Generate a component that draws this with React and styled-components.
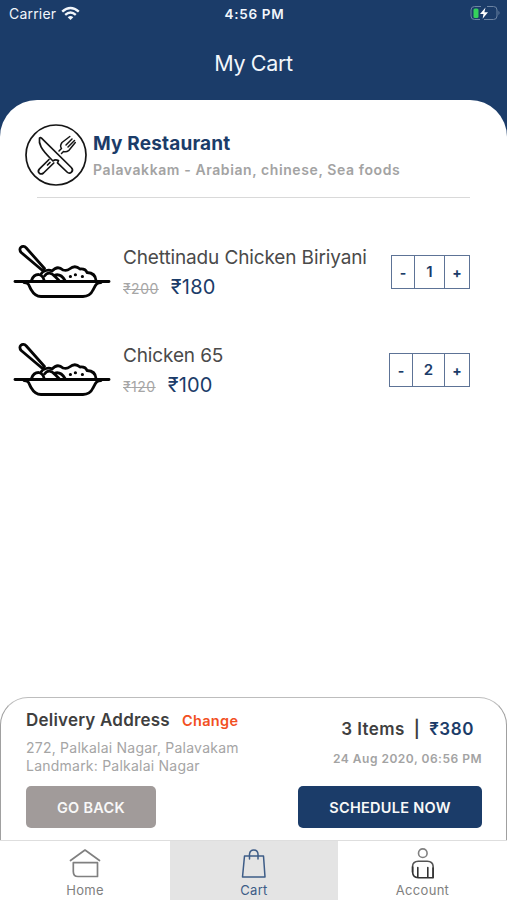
import React, { useState } from 'react';
import styled, { createGlobalStyle } from 'styled-components';

const NAVY = '#1b3c69';

const GlobalStyle = createGlobalStyle`
  body {
    margin: 0;
    background: #fff;
    font-family: Inter, 'Liberation Sans', sans-serif;
    overflow: hidden;
  }

  * {
    box-sizing: border-box;
  }
`;

const Screen = styled.div`
  display: flex;
  flex-direction: column;
  width: 507px;
  height: 900px;
  background: linear-gradient(${NAVY} 200px, #fff 200px);
`;

const StatusBar = styled.div`
  display: grid;
  grid-template-columns: 1fr auto 1fr;
  align-items: center;
  height: 28px;
  padding: 0 6px 0 9px;
  color: #f2f6fb;
`;

const Carrier = styled.div`
  display: flex;
  align-items: center;
  gap: 5px;
  margin-top: -2px;
  font-size: 14px;
  letter-spacing: 0.2px;
`;

const Clock = styled.div`
  margin-right: 1px;
  font-size: 13.5px;
  font-weight: 600;
  letter-spacing: 0.7px;
`;

const Battery = styled.svg`
  justify-self: end;
  margin-top: -2px;
`;

const Header = styled.h1`
  height: 72px;
  margin: 0;
  color: #f2f6fb;
  font-size: 21.5px;
  font-weight: 400;
  line-height: 71px;
  letter-spacing: -0.35px;
  text-align: center;
`;

const Sheet = styled.main`
  display: flex;
  flex: 1;
  flex-direction: column;
  background: #fff;
  border-radius: 37px 37px 0 0;
`;

const Restaurant = styled.section`
  display: flex;
  gap: 6px;
  height: 97px;
  padding: 24px 0 0 25px;
`;

const RestaurantName = styled.h2`
  margin: 8px 0 0;
  color: ${NAVY};
  font-size: 19px;
  font-weight: 700;
  line-height: 24px;
  letter-spacing: 0.16px;
`;

const Cuisine = styled.div`
  margin-top: 4px;
  color: #a3a3a3;
  font-size: 14px;
  font-weight: 600;
  line-height: 20px;
  letter-spacing: 0.59px;
`;

const Divider = styled.hr`
  width: 433px;
  height: 1px;
  margin: 0 0 0 37px;
  border: 0;
  background: #d9d9d9;
`;

const Items = styled.ul`
  flex: 1;
  margin: 0;
  padding: 37px 37px 0 13px;
  list-style: none;
`;

const Item = styled.li`
  display: flex;
  align-items: flex-start;
  height: 98px;
`;

const Dish = styled.svg`
  margin-top: 8px;
`;

const ItemInfo = styled.div`
  flex: 1;
  margin-left: 12px;
`;

const ItemName = styled.div`
  padding-top: 11px;
  color: #4a4a4a;
  font-size: 19px;
  line-height: 24px;
  letter-spacing: -0.13px;
  white-space: nowrap;
`;

const Prices = styled.div`
  display: flex;
  align-items: baseline;
  gap: 12px;
  margin-top: 3px;
  line-height: 28px;
`;

const OldPrice = styled.s`
  color: #a6a6a6;
  font-size: 14px;
  letter-spacing: 0.5px;
`;

const Price = styled.span`
  color: ${NAVY};
  font-size: 20px;
  letter-spacing: 0.2px;
`;

const Stepper = styled.div`
  display: flex;
  height: 34px;
  margin-top: 20px;
  border: 1px solid #5d7396;
`;

const StepButton = styled.button`
  width: ${({ $width }) => $width}px;
  padding: 1px 0 0;
  border: 0;
  background: none;
  color: ${NAVY};
  font: 700 14px Inter, sans-serif;
`;

const Quantity = styled.span`
  width: ${({ $width }) => $width}px;
  border: solid #5d7396;
  border-width: 0 1px;
  color: ${NAVY};
  font-size: 15px;
  font-weight: 600;
  line-height: 32px;
  text-align: center;
`;

const Checkout = styled.section`
  display: flex;
  flex-direction: column;
  justify-content: space-between;
  height: 143px;
  padding: 10px 24px 12px 25px;
  border: solid #a0a0a0;
  border-width: 1px 1px 0;
  border-top-color: #bdbdbd;
  border-radius: 28px 28px 0 0;
`;

const Row = styled.div`
  display: flex;
  justify-content: space-between;
`;

const AddressHead = styled.div`
  display: flex;
  align-items: baseline;
  gap: 12px;
  line-height: 24px;
`;

const AddressTitle = styled.strong`
  color: #3f3f3f;
  font-size: 17px;
  font-weight: 600;
  letter-spacing: 0.2px;
`;

const Change = styled.a`
  color: #f2501f;
  font-size: 14.5px;
  font-weight: 600;
  letter-spacing: 0.35px;
`;

const Address = styled.div`
  margin-top: 6px;
  color: #a5a5a5;
  font-size: 14px;
  line-height: 17.5px;
  letter-spacing: 0.23px;
`;

const Summary = styled.div`
  display: flex;
  flex-direction: column;
  align-items: flex-end;
  padding-top: 9px;
`;

const Total = styled.div`
  display: flex;
  gap: 9px;
  margin-right: 8px;
  color: #3f3f3f;
  font-size: 17px;
  font-weight: 600;
  line-height: 24px;
  letter-spacing: 0.4px;
`;

const TotalPrice = styled.span`
  color: ${NAVY};
  letter-spacing: 0.6px;
`;

const Date = styled.div`
  margin-top: 8px;
  color: #a3a3a3;
  font-size: 12px;
  font-weight: 600;
  line-height: 20px;
  letter-spacing: 0.5px;
`;

const Button = styled.button`
  width: ${({ $width }) => $width}px;
  height: 42px;
  padding: 0;
  border: 0;
  border-radius: 5px;
  background: ${({ $primary }) => ($primary ? NAVY : '#a19b9a')};
  color: #f8f8f8;
  font: 600 14.5px Inter, sans-serif;
  letter-spacing: 0.28px;
`;

const TabBar = styled.nav`
  display: grid;
  grid-template-columns: 170px 168px 169px;
  height: 60px;
  border-top: 1px solid #dedede;
`;

const Tab = styled.div`
  display: flex;
  flex-direction: column;
  align-items: center;
  padding-top: 6px;
  background: ${({ $active }) => ($active ? '#e4e4e4' : '#fff')};
  color: ${({ $active }) => ($active ? '#3d5c87' : '#808080')};
  font-size: 13px;
  line-height: 18px;
  letter-spacing: 0.3px;
`;

const WifiIcon = () => (
  <svg width="19" height="15" viewBox="0 0 19 15" fill="none" stroke="#f2f6fb" strokeWidth="2.4">
    <path d="M1.2 5.7Q9.5 -1.8 17.8 5.7" />
    <path d="M4.2 8.8Q9.5 4.2 14.8 8.8" />
    <path d="M6.7 11.2Q9.5 8.8 12.3 11.2L9.5 14.1Z" fill="#f2f6fb" stroke="none" />
  </svg>
);

const BatteryIcon = () => (
  <Battery width="31" height="16" viewBox="0 0 31 16">
    <path
      d="M11 1.5H4.5A3.5 3.5 0 0 0 1 5v6a3.5 3.5 0 0 0 3.5 3.5H10M17 1.5h6.5A3.5 3.5 0 0 1 27 5v6a3.5 3.5 0 0 1-3.5 3.5H14"
      fill="none"
      stroke="#6d84a3"
    />
    <path d="M28.5 5.8Q30.5 8 28.5 10.2Z" fill="#6d84a3" />
    <rect x="3.5" y="3.5" width="5" height="9.5" rx="1.5" fill="#35d15b" />
    <path d="M15.5 2.5 10 8.9h3.5L12.6 13.8 18 7.3h-3.6Z" fill="#fff" />
  </Battery>
);

const CutleryIcon = () => (
  <svg width="62" height="62" viewBox="0 0 62 62" fill="none" stroke="#151515" strokeWidth="1.7" strokeLinejoin="round" strokeLinecap="round">
    <circle cx="31" cy="31" r="30" />
    <path d="M14.5 14C13.5 20 16 25 25.5 34.5L28 37Q30 35 33.5 36.5L32.5 38.8 42 48C45 51 49.5 47 46.3 43.5L16.5 14.2Q15.5 13 14.5 14Z" />
    <path d="M24 35.5 14.5 44.8C11.5 48 15.5 51.5 18.5 49L28.8 39M25 38.5l-2.5 2.5" />
    <path d="M44.8 12.5 37 18.5Q34.5 22 36.5 24.5L34 27M50.3 18.5 44 26.3Q41 28.5 38.5 27.5L36.5 29.5M47 15 41 21M49.5 16.5 43 23" strokeWidth="1.5" />
  </svg>
);

const DishIcon = () => (
  <Dish width="98" height="56" viewBox="0 0 98 56" fill="none" stroke="#050505" strokeWidth="2.8" strokeLinecap="round" strokeLinejoin="round">
    <path d="M2 38.5H96" />
    <path d="M11 39.5C16 39.5 16 43 18 46.5Q22 53.5 28 53.5H70Q77 53.5 80 47C82.5 42.5 83 39.5 88 39.5" />
    <path d="M31.5 25.5 13.3 5C9.5 .8 4.5 5.5 8.2 9.5L29.5 27.5Z" />
    <path d="M18.5 37.5Q20.5 31.5 25.5 31.5Q30 32.5 31 37M27.5 32Q29 28.5 33 27.5Q36.500 26.500 39 28Q44.500 22 50 27Q54 28 56.500 26Q62 21.500 67 26Q72.500 25.500 74 29.500Q82.500 30 83 37.500" />
    <path d="M31.5 33Q36 27 42 33.5L46 37.500M42 32Q48 30.500 52 37.500" />
    <path d="M57.3 33.500h.2M62.300 31.800h.2M69.300 33.500h.2" strokeWidth="3" />
  </Dish>
);

const HomeIcon = () => (
  <svg width="32" height="34" viewBox="0 0 32 34" fill="none" stroke="currentColor" strokeWidth="1.7" strokeLinecap="round" strokeLinejoin="round">
    <path d="M1.5 13.5 16 3l14.500 10.500" />
    <path d="M4.3 15.7H28.5V29.5H9Q4.3 29.5 4.3 24.5Z" />
  </svg>
);

const BagIcon = () => (
  <svg width="32" height="34" viewBox="0 0 32 34" fill="none" stroke="currentColor" strokeWidth="1.5" strokeLinecap="round" strokeLinejoin="round">
    <path d="M6.5 9H25.5L27 30H4.5Z" />
    <path d="M11.5 12V7Q12 3 15.8 3Q19.7 3 20 7V12" />
  </svg>
);

const PersonIcon = () => (
  <svg width="32" height="34" viewBox="0 0 32 34" fill="none" stroke="currentColor" strokeWidth="1.6" strokeLinecap="round" strokeLinejoin="round">
    <circle cx="15.8" cy="6.2" r="4.3" />
    <path d="M5.6 25V19Q5.8 14.5 11.3 14.2H20.3Q25.8 14.5 26.1 19V30.5" stroke="#555" />
    <path d="M5.6 20V25Q5.8 30.5 11.3 30.8H26.1V21M10.8 20.5V30M20.8 20.5V30" stroke="#333" />
  </svg>
);

const tabs = [
  { label: 'Home', Icon: HomeIcon },
  { label: 'Cart', Icon: BagIcon },
  { label: 'Account', Icon: PersonIcon },
];

const initialItems = [
  { name: 'Chettinadu Chicken Biriyani', oldPrice: 200, price: 180, count: 1, widths: [22, 31, 24] },
  { name: 'Chicken 65', oldPrice: 120, price: 100, count: 2, widths: [22, 33, 24] },
];

const App = () => {
  const [items, setItems] = useState(initialItems);

  const changeCount = (name, step) => {
    setItems(items.map((item) => (
      item.name === name ? { ...item, count: Math.max(0, item.count + step) } : item
    )));
  };

  return (
    <Screen>
      <GlobalStyle />
      <StatusBar>
        <Carrier>Carrier <WifiIcon /></Carrier>
        <Clock>4:56 PM</Clock>
        <BatteryIcon />
      </StatusBar>
      <Header>My Cart</Header>

      <Sheet>
        <Restaurant>
          <CutleryIcon />
          <div>
            <RestaurantName>My Restaurant</RestaurantName>
            <Cuisine>Palavakkam - Arabian, chinese, Sea foods</Cuisine>
          </div>
        </Restaurant>
        <Divider />

        <Items>
          {items.map(({ name, oldPrice, price, count, widths }) => (
            <Item key={name}>
              <DishIcon />
              <ItemInfo>
                <ItemName>{name}</ItemName>
                <Prices>
                  <OldPrice>₹{oldPrice}</OldPrice>
                  <Price>₹{price}</Price>
                </Prices>
              </ItemInfo>
              <Stepper>
                <StepButton $width={widths[0]} onClick={() => changeCount(name, -1)}>-</StepButton>
                <Quantity $width={widths[1]}>{count}</Quantity>
                <StepButton $width={widths[2]} onClick={() => changeCount(name, 1)}>+</StepButton>
              </Stepper>
            </Item>
          ))}
        </Items>

        <Checkout>
          <Row>
            <div>
              <AddressHead>
                <AddressTitle>Delivery Address</AddressTitle>
                <Change>Change</Change>
              </AddressHead>
              <Address>
                272, Palkalai Nagar, Palavakam
                <br />
                Landmark: Palkalai Nagar
              </Address>
            </div>
            <Summary>
              <Total>
                <span>3 Items</span>
                <span>|</span>
                <TotalPrice>₹380</TotalPrice>
              </Total>
              <Date>24 Aug 2020, 06:56 PM</Date>
            </Summary>
          </Row>
          <Row>
            <Button $width={130}>GO BACK</Button>
            <Button $width={184} $primary>SCHEDULE NOW</Button>
          </Row>
        </Checkout>
      </Sheet>

      <TabBar>
        {tabs.map(({ label, Icon }) => (
          <Tab key={label} $active={label === 'Cart'}>
            <Icon />
            {label}
          </Tab>
        ))}
      </TabBar>
    </Screen>
  );
};

export default App;
